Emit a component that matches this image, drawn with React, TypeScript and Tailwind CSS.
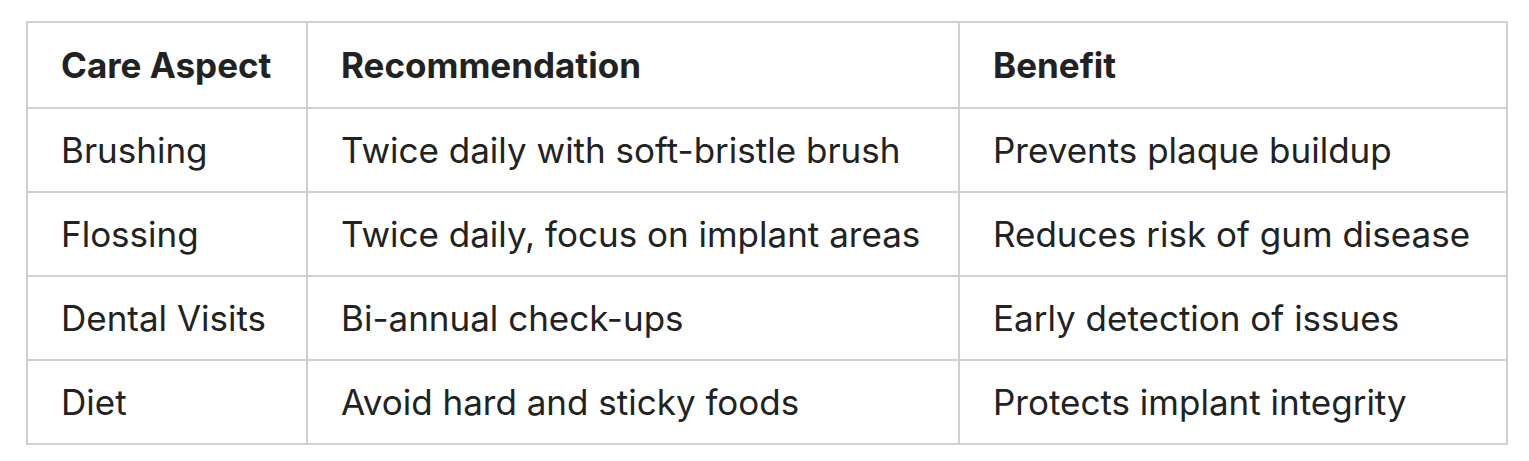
import React from 'react';

const rows = [
  ['Brushing', 'Twice daily with soft-bristle brush', 'Prevents plaque buildup'],
  ['Flossing', 'Twice daily, focus on implant areas', 'Reduces risk of gum disease'],
  ['Dental Visits', 'Bi-annual check-ups', 'Early detection of issues'],
  ['Diet', 'Avoid hard and sticky foods', 'Protects implant integrity'],
];

const App: React.FC = () => {
  return (
    <div className="bg-white w-[1529px] h-[461px] pt-[21px] pl-[26px]" style={{ fontFamily: 'Inter, "Noto Sans", sans-serif' }}>
      <table className="border-collapse text-[35px] leading-[48px] text-[#222222]">
        <thead>
          <tr>
            <th className="w-[280px] h-[86px] border-2 border-[#cfcfcf] px-[33px] text-left font-bold">Care Aspect</th>
            <th className="w-[652px] border-2 border-[#cfcfcf] px-[33px] text-left font-bold">Recommendation</th>
            <th className="w-[548px] border-2 border-[#cfcfcf] px-[33px] text-left font-bold">Benefit</th>
          </tr>
        </thead>
        <tbody>
          {rows.map((row) => (
            <tr key={row[0]}>
              {row.map((cell, i) => (
                <td key={i} className="h-[84px] border-2 border-[#cfcfcf] px-[33px] whitespace-nowrap">
                  {cell}
                </td>
              ))}
            </tr>
          ))}
        </tbody>
      </table>
    </div>
  );
};

export default App;
